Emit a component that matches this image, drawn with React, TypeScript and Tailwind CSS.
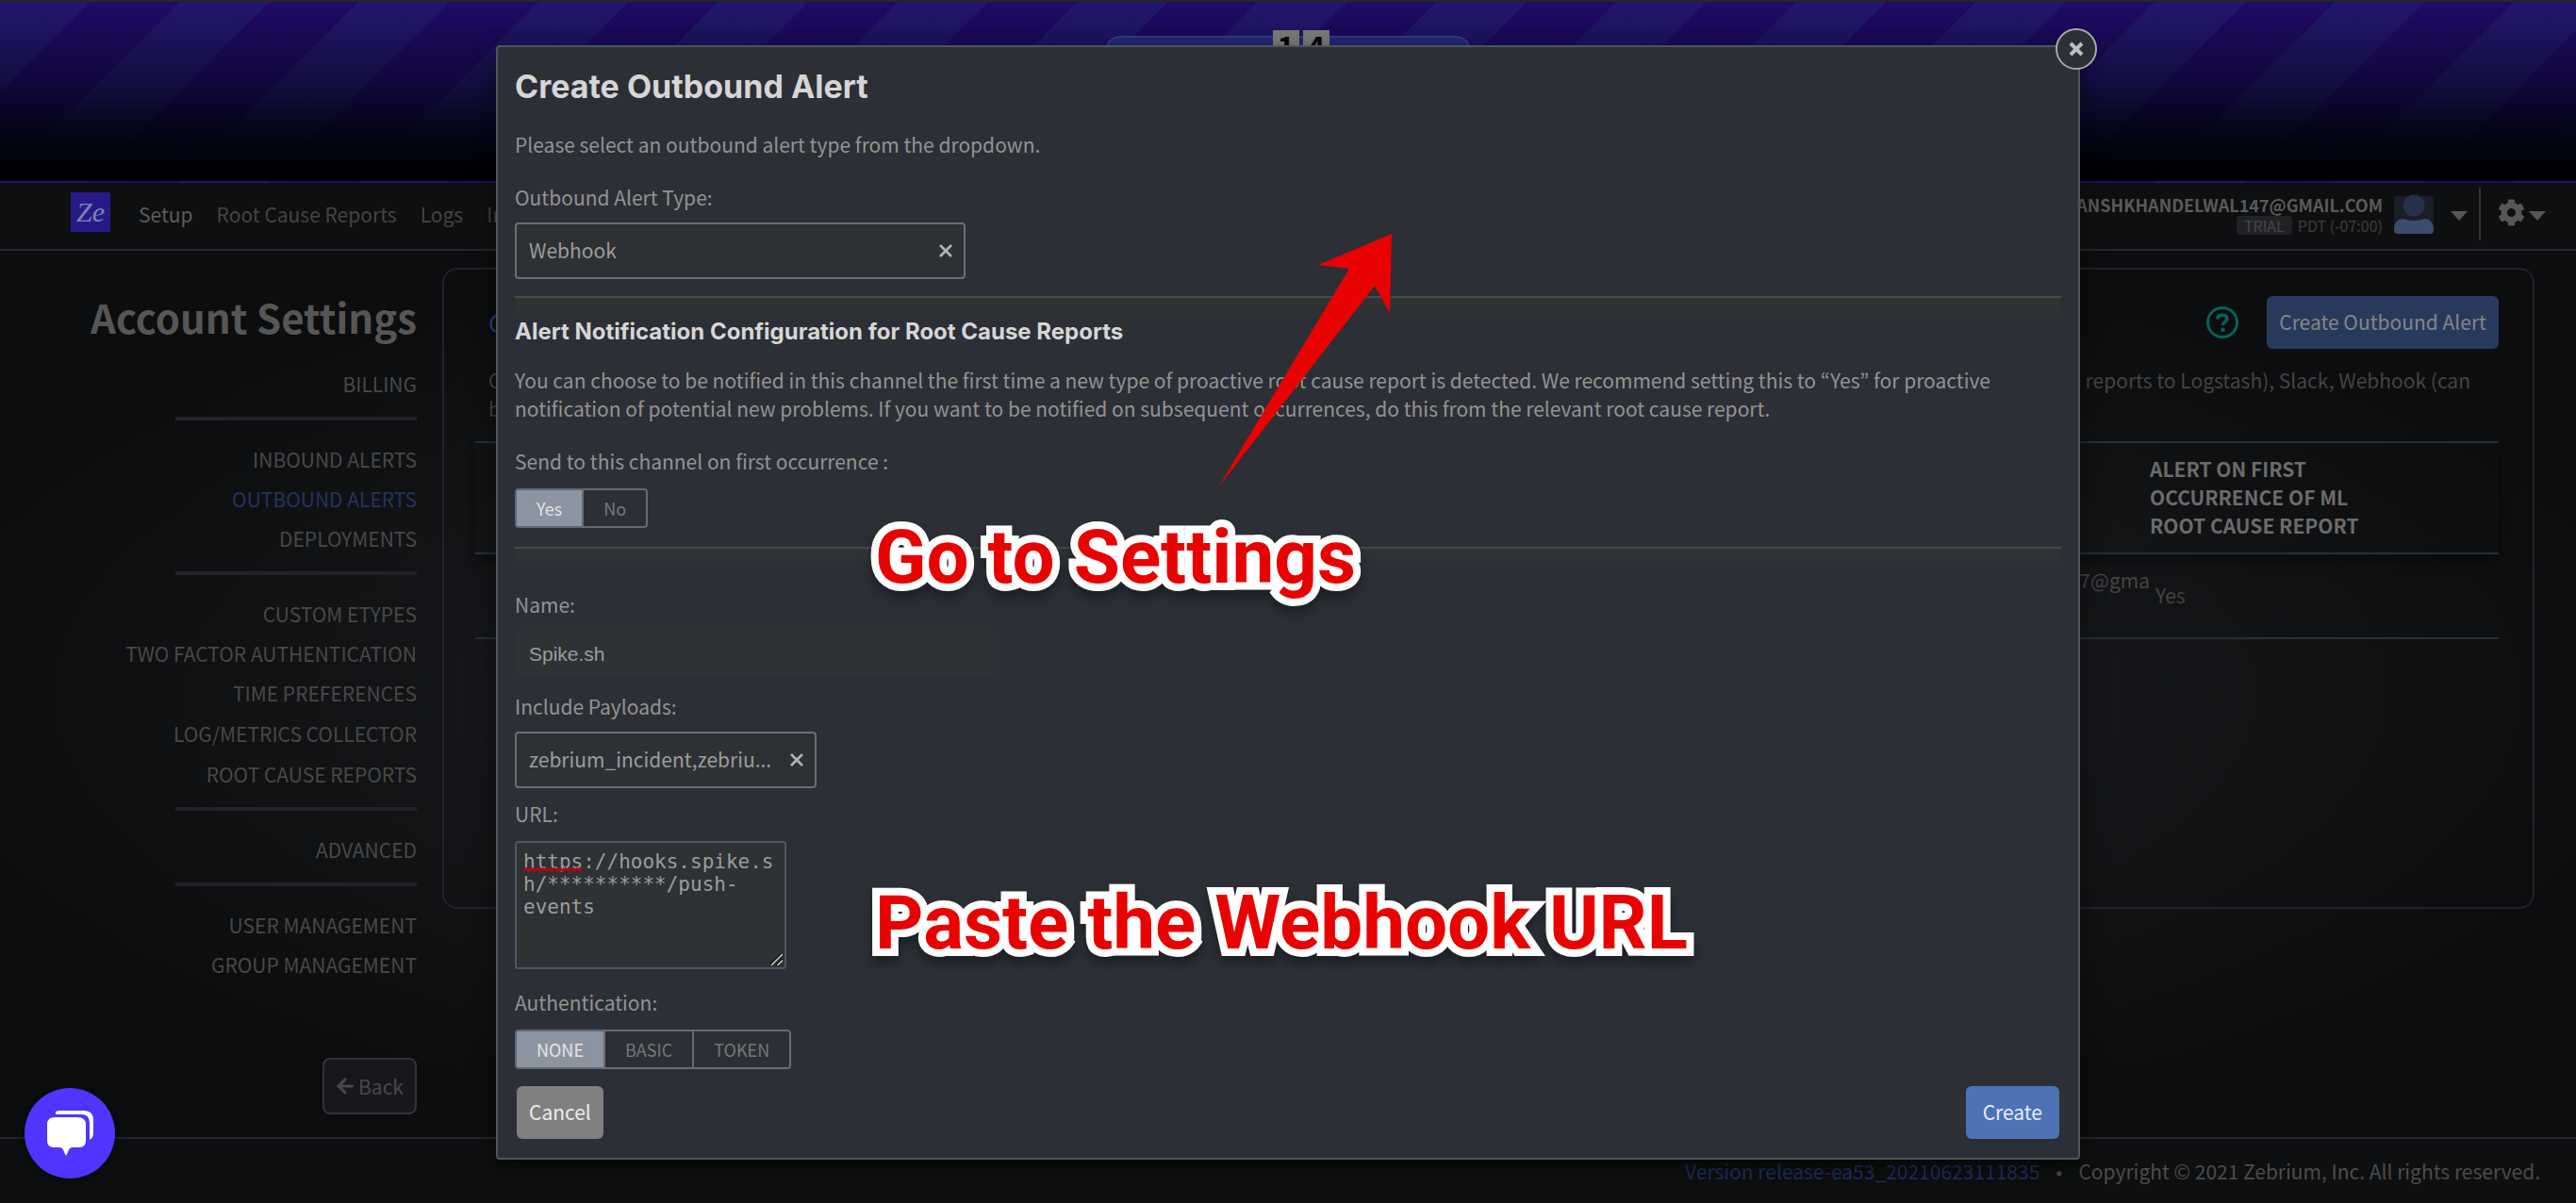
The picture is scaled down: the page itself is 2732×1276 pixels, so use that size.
import React from "react";
import { FaArrowLeft, FaCog } from "react-icons/fa";

const navGroups: { label: string; active?: boolean; tall?: boolean }[][] = [
  [{ label: "BILLING" }],
  [{ label: "INBOUND ALERTS" }, { label: "OUTBOUND ALERTS", active: true }, { label: "DEPLOYMENTS" }],
  [
    { label: "CUSTOM ETYPES" },
    { label: "TWO FACTOR AUTHENTICATION" },
    { label: "TIME PREFERENCES" },
    { label: "LOG/METRICS COLLECTOR", tall: true },
    { label: "ROOT CAUSE REPORTS" },
  ],
  [{ label: "ADVANCED" }],
  [{ label: "USER MANAGEMENT" }, { label: "GROUP MANAGEMENT" }],
];

function Caret() {
  return (
    <svg width="18" height="10" viewBox="0 0 18 10" aria-hidden="true">
      <path d="M0 0H18L9 10Z" fill="#565656" />
    </svg>
  );
}

function Cross({ size, width, color }: { size: number; width: number; color: string }) {
  return (
    <svg width={size} height={size} viewBox="0 0 16 16" aria-hidden="true">
      <path d="M2 2L14 14M14 2L2 14" stroke={color} strokeWidth={width} />
    </svg>
  );
}

function Banner() {
  return (
    <div className="relative h-[194px] border-t-2 border-[#262626] bg-[#000] bg-[repeating-linear-gradient(135deg,#23176f_0_12.5%,#200a66_12.5%_25%)] bg-[length:381px_381px]">
      <div className="h-[190px] bg-[linear-gradient(to_bottom,transparent,rgba(0,3,12,0.48)_45%,rgba(0,3,12,0.93)_78%,#000)]" />
      <div className="absolute left-1/2 top-[36px] flex w-[388px] -translate-x-1/2 justify-center rounded-2xl border-2 border-[#2a3a80] bg-[#23256b] pb-2">
        <div className="-mt-2 ml-[28px] flex h-12 gap-1 text-[32px] leading-8 font-bold text-black">
          <span className="w-7 bg-[#777] text-center">1</span>
          <span className="w-7 bg-[#777] text-center">4</span>
        </div>
      </div>
    </div>
  );
}

function TopBar() {
  return (
    <header className="flex h-[72px] items-center border-b-2 border-[#25272b] bg-[#0e0f10] pr-8 pl-[75px] shadow-[0_2px_0_#17191b]">
      <a
        href="#home"
        className="mb-2 flex h-[42px] w-[42px] items-center justify-center bg-[#271a88] font-['Liberation_Serif',serif] text-[30px] leading-none text-[#7686b0] italic"
      >
        Ze
      </a>
      <nav className="mb-1 ml-[30px] flex gap-[25px] text-[#444]">
        <a href="#setup" className="text-[#5c5c5c]">Setup</a>
        <a href="#rcr">Root Cause Reports</a>
        <a href="#logs">Logs</a>
        <a href="#in">In</a>
      </nav>
      <div className="ml-auto flex items-center">
        <div className="mr-3 mb-1 text-right">
          <div className="text-[18px] leading-6 font-semibold text-[#5a5a5a]">YANSHKHANDELWAL147@GMAIL.COM</div>
          <div className="flex items-center justify-end gap-1.5 text-[16px] leading-5 text-[#3d3d3d]">
            <span className="rounded bg-[#202226] px-2 text-[#454545]">TRIAL</span>
            <span>PDT (-07:00)</span>
          </div>
        </div>
        <svg className="mb-1" width="42" height="42" viewBox="0 0 42 42" role="img" aria-label="Profile">
          <rect y="2" width="42" height="40" rx="3" fill="#1a1e27" />
          <circle cx="21" cy="12" r="11.5" fill="#27304a" />
          <path d="M0 38V37C0 30 4 26 10 26C16 28.500 26 28.500 32 26C38 26 42 30 42 37V38Q42 42 38 42H4Q0 42 0 38Z" fill="#3c4b6e" />
        </svg>
        <button className="ml-[18px]" aria-label="Profile menu"><Caret /></button>
        <div className="mx-3 mr-[18px] mb-1 h-14 w-0.5 bg-[#333]" />
        <button className="flex items-center gap-1" aria-label="Settings menu">
          <FaCog size={29} color="#565656" className="mb-2" />
          <Caret />
        </button>
      </div>
    </header>
  );
}

function Sidebar() {
  return (
    <aside className="flex w-[442px] shrink-0 flex-col items-end pt-10">
      <h1 className="mb-[21px] text-[42px] leading-[60px] font-bold text-[#565656]">Account Settings</h1>
      {navGroups.map((group, i) => (
        <React.Fragment key={i}>
          {i > 0 && <hr className="mt-[13px] mb-[21px] h-1 w-64 border-0 bg-[#212327]" />}
          {group.map((item) => (
            <a
              key={item.label}
              href="#settings"
              className={`flex items-center pb-[3px] ${item.tall ? "h-11" : "h-[42px]"} ${item.active ? "text-[#24345e]" : "text-[#484848]"}`}
            >
              {item.label}
            </a>
          ))}
        </React.Fragment>
      ))}
      <button className="mt-[77px] flex h-[60px] w-[100px] items-center justify-center gap-1 rounded-lg border-2 border-[#333] bg-[#17181b] text-[#484848]">
        <FaArrowLeft size={20} />
        Back
      </button>
    </aside>
  );
}

function AlertsPanel() {
  return (
    <section className="mt-[18px] mr-11 ml-[27px] min-h-[680px] flex-1 self-start rounded-2xl border-2 border-[#212327] pt-7 pr-9 pl-[33px] text-[#444]">
      <div className="flex items-center pl-3.5">
        <h2 className="text-[26px] text-[#24427c]">O</h2>
        <svg className="ml-auto" width="34" height="34" viewBox="0 0 34 34" role="img" aria-label="Help">
          <circle cx="17" cy="17" r="15.500" fill="none" stroke="#00635c" strokeWidth="3" />
          <path d="M12 13.500C12 10.500 14 9 17 9C20 9 22 10.800 22 13.200C22 16.600 17.500 16.300 17.500 20" fill="none" stroke="#00635c" strokeWidth="3.500" />
          <circle cx="17.500" cy="24.800" r="2.300" fill="#00635c" />
        </svg>
        <button className="ml-[30px] h-14 rounded-md bg-[#283a5c] px-[13px] pb-0.5 text-[#858585]">Create Outbound Alert</button>
      </div>
      <div className="mt-[18px] flex justify-between pr-[30px] pl-3.5">
        <p>C<br />b</p>
        <p>e reports to Logstash), Slack, Webhook (can</p>
      </div>
      <table className="mt-5 w-full table-fixed text-left">
        <thead>
          <tr className="border-y-2 border-[#292e33] shadow-[0_10px_12px_rgba(0,0,0,0.35)]">
            <th scope="col" aria-label="Created by" />
            <th scope="col" className="w-[370px] pt-3 pb-3.5 font-bold text-[#6b6b6b]">
              ALERT ON FIRST
              <br />
              OCCURRENCE OF ML
              <br />
              ROOT CAUSE REPORT
            </th>
          </tr>
        </thead>
        <tbody>
          <tr className="h-[90px] border-b-2 border-[#292e33] align-top">
            <td className="pt-3 text-right">47@gma</td>
            <td className="pt-7 pl-1.5">Yes</td>
          </tr>
        </tbody>
      </table>
    </section>
  );
}

function ClearableSelect({ id, value, wide }: { id: string; value: string; wide?: boolean }) {
  return (
    <div className={`relative mt-3 ${wide ? "w-[478px]" : "w-[320px]"}`}>
      <select
        id={id}
        className="block h-[60px] w-full appearance-none rounded border-2 border-[#6e6e6e] bg-[#2d3135] px-[13px] pb-0.5 text-[#9c9c9c]"
      >
        <option>{value}</option>
      </select>
      <button className="absolute top-[22px] right-[13px]" aria-label="Clear">
        <Cross size={16} width={2.6} color="#b4b4b4" />
      </button>
    </div>
  );
}

function Toggle({ options, label }: { options: string[]; label: string }) {
  return (
    <div role="group" aria-label={label} className="flex h-[42px] text-[18px]">
      {options.map((option, i) => (
        <button
          key={option}
          aria-pressed={i === 0}
          className={
            i === 0
              ? "rounded-l border-2 border-[#5c6876] bg-[#8b95a1] px-[21px] text-[#e4e4e4]"
              : "-ml-0.5 border-2 border-[#6b6b6b] px-[21px] text-[#777] last:rounded-r"
          }
        >
          {option}
        </button>
      ))}
    </div>
  );
}

function Divider() {
  return (
    <div className="relative h-0.5 bg-[#434a54]">
      <div className="absolute inset-x-0 top-0.5 h-5 bg-linear-to-b from-[#333331] to-[#2c2f36]" />
    </div>
  );
}

function AlertDialog() {
  return (
    <div
      role="dialog"
      aria-labelledby="dialog-title"
      className="relative w-full max-w-[1680px] rounded border-2 border-[#4b545d] bg-[#2c2f36] px-[18px] pt-[22px] pb-5 text-[#939393] shadow-[0_10px_24px_rgba(0,0,0,0.5)]"
    >
      <button
        aria-label="Close"
        className="absolute -top-5 -right-5 flex h-11 w-11 items-center justify-center rounded-full border-2 border-[#a8a8a8] bg-[#2c2f35]"
      >
        <Cross size={16} width={4} color="#bdbdbd" />
      </button>
      <h2 id="dialog-title" className="font-['Inter',sans-serif] text-[34px] leading-10 font-bold text-[#d6d6d6]">
        Create Outbound Alert
      </h2>
      <p className="mt-[26px]">Please select an outbound alert type from the dropdown.</p>
      <label htmlFor="type" className="mt-[26px] block">Outbound Alert Type:</label>
      <ClearableSelect id="type" value="Webhook" wide />
      <div className="mt-[18px]"><Divider /></div>
      <h3 className="relative mt-[21px] font-['Inter',sans-serif] text-[24px] font-bold text-[#d6d6d6]">
        Alert Notification Configuration for Root Cause Reports
      </h3>
      <p className="mt-[21px] max-w-[1580px]">
        You can choose to be notified in this channel the first time a new type of proactive root cause report is
        detected. We recommend setting this to “Yes” for proactive notification of potential new problems. If you want
        to be notified on subsequent occurrences, do this from the relevant root cause report.
      </p>
      <p className="mt-[26px] mb-3.5">Send to this channel on first occurrence :</p>
      <Toggle options={["Yes", "No"]} label="Send to this channel on first occurrence" />
      <div className="mt-5"><Divider /></div>
      <label htmlFor="name" className="mt-11 block">Name:</label>
      <input
        id="name"
        defaultValue="Spike.sh"
        className="mt-3.5 ml-0.5 block h-12 w-[506px] rounded bg-[#2e3235] px-[13px] font-['Liberation_Sans',sans-serif] text-[21px] text-[#9c9c9c]"
      />
      <label htmlFor="payloads" className="mt-4 block">Include Payloads:</label>
      <ClearableSelect id="payloads" value="zebrium_incident,zebriu..." />
      <label htmlFor="url" className="mt-3 block">URL:</label>
      <div className="relative mt-3.5 w-[288px]">
        <textarea
          id="url"
          spellCheck={false}
          defaultValue={"https://hooks.spike.s\nh/**********/push-\nevents"}
          className="block h-[136px] w-full resize-none overflow-hidden rounded border-2 border-[#4d5963] bg-[#2e3235] px-[7px] py-2 font-['DejaVu_Sans_Mono',monospace] text-[21px] leading-6 text-[#9c9c9c]"
        />
        <svg className="absolute top-[28px] left-[9px]" width="64" height="5" viewBox="0 0 64 5" aria-hidden="true">
          <path
            d="M0 4L3 1L6 4L9 1L12 4L15 1L18 4L21 1L24 4L27 1L30 4L33 1L36 4L39 1L42 4L45 1L48 4L51 1L54 4L57 1L60 4L63 1"
            fill="none"
            stroke="#c4000c"
            strokeWidth="2"
          />
        </svg>
        <svg className="absolute right-1 bottom-1" width="13" height="13" viewBox="0 0 14 14" aria-hidden="true">
          <path d="M0 14L14 0M7 14L14 7" stroke="#101010" strokeWidth="3" />
          <path d="M1 14L14 1M8 14L14 8" stroke="#d8d8d8" strokeWidth="1.500" />
        </svg>
      </div>
      <p className="mt-5 mb-3.5">Authentication:</p>
      <Toggle options={["NONE", "BASIC", "TOKEN"]} label="Authentication" />
      <div className="mt-[18px] flex justify-between px-0.5">
        <button className="h-14 rounded-md bg-[#808080] px-[13px] pb-0.5 text-[#ececec]">Cancel</button>
        <button className="h-14 rounded-md bg-[#4d73b5] px-[18px] pb-0.5 text-[#e6ecf5]">Create</button>
      </div>
    </div>
  );
}

function Annotations() {
  return (
    <div className="pointer-events-none absolute inset-0 font-['Roboto',sans-serif] text-[80px] leading-[94px] font-bold whitespace-nowrap text-[#e80202] [-webkit-text-stroke:16px_#fff] [paint-order:stroke_fill]">
      <svg className="absolute top-[248px] left-[1292px]" width="184" height="270" viewBox="0 0 184 270" aria-hidden="true">
        <path d="M184 0L106 33L139 37L0 269L166 55L182 84Z" fill="#e80202" />
      </svg>
      <div className="absolute top-[544px] left-[928px] drop-shadow-[0_8px_6px_rgba(20,26,28,0.7)]">Go to Settings</div>
      <div className="absolute top-[932px] left-[928px] drop-shadow-[0_8px_6px_rgba(20,26,28,0.7)]">Paste the Webhook URL</div>
    </div>
  );
}

export default function App() {
  return (
    <div className="relative flex min-h-screen flex-col overflow-hidden bg-[#0c0d0f] font-['Noto_Sans_CJK_KR',sans-serif] text-[21px] leading-[30px]">
      <Banner />
      <TopBar />
      <main className="flex flex-1 bg-[radial-gradient(ellipse_at_center,#1b2025_0%,#16181b_35%,#0c0d0e_75%)]">
        <Sidebar />
        <AlertsPanel />
      </main>
      <footer className="flex h-[70px] items-center justify-end gap-[17px] border-t-2 border-[#24262a] bg-[#0e0f10] pr-[38px] text-[#4c4c4c]">
        <a href="#version" className="text-[#1f3160]">Version release-ea53_20210623111835</a>
        <span>•</span>
        <span>Copyright © 2021 Zebrium, Inc. All rights reserved.</span>
      </footer>
      <div className="absolute inset-0 flex items-start justify-center pt-12">
        <AlertDialog />
      </div>
      <button
        aria-label="Open chat"
        className="absolute bottom-[26px] left-[26px] flex h-24 w-24 items-center justify-center rounded-full bg-[#4f35ff] shadow-[0_2px_16px_rgba(0,0,0,0.5)]"
      >
        <svg width="50" height="48" viewBox="0 0 50 48" aria-hidden="true">
          <path d="M10 1Q12 0 16 0H40Q50 0 50 10V24Q50 29 46 31V13Q46 4 37 4H10Z" fill="#fff" />
          <path d="M9 7H33Q42 7 42 15V32Q42 39 35 39H27Q24 40 23 44L21 48L19 44Q18 40 15 39H8Q1 39 1 32V15Q1 7 9 7Z" fill="#fff" />
        </svg>
      </button>
      <Annotations />
    </div>
  );
}
